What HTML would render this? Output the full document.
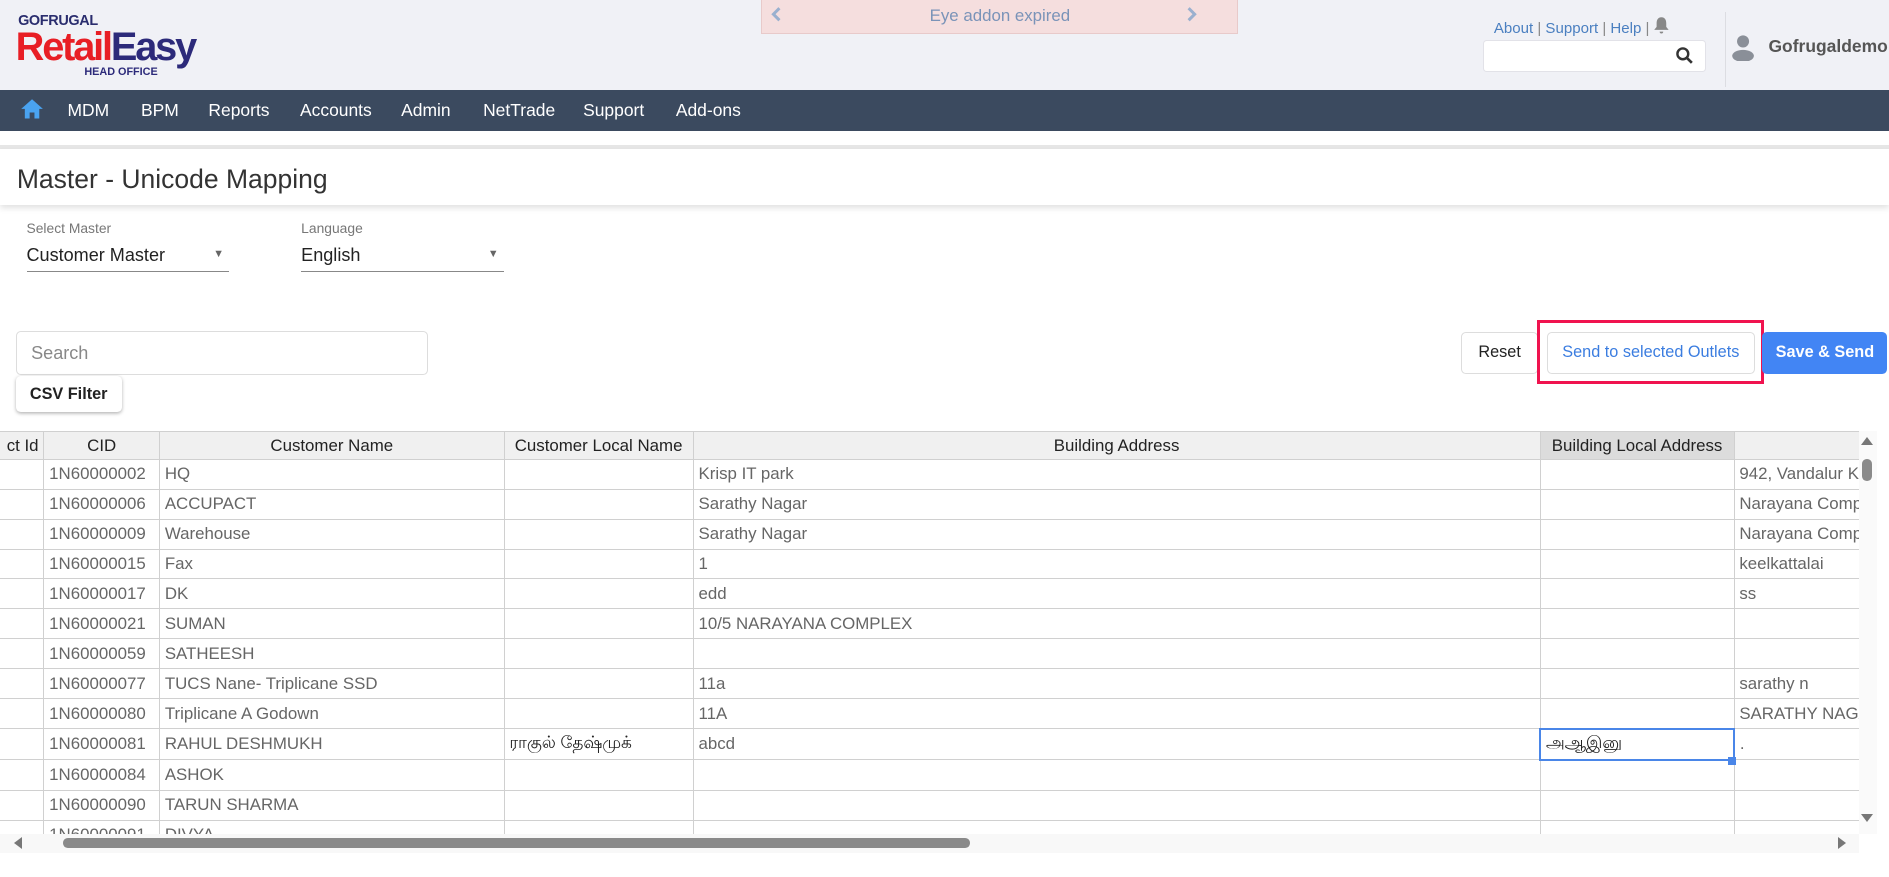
<!DOCTYPE html>
<html><head><meta charset="utf-8"><style>
html,body{margin:0;padding:0;overflow:hidden;background:#fff}
#w{zoom:1.2047;width:1568px;height:728px;position:relative;font-family:"Liberation Sans","Noto Sans CJK SC",sans-serif;overflow:hidden}
.a{position:absolute}
.hdr{left:0;top:0;width:1568px;height:75px;background:#f0f1f6}
.nav{left:0;top:75px;width:1568px;height:34px;background:#3b4a5f}
.ni{position:absolute;top:83px;color:#fff;font-size:14.5px}
.lnk{color:#4a7fc0;font-size:12.5px}
table{border-collapse:collapse;font-size:14px;table-layout:fixed}
td,th{border:1px solid #d0d0d0;height:24px;padding:0 4px;white-space:nowrap;overflow:hidden;color:#666;text-align:left}
th{background:#f0f0f0;color:#222;font-weight:normal;text-align:center;height:22px}
.btn{border:1px solid #ddd;border-radius:4px;background:#fff;font-size:13.5px;text-align:center;line-height:32px}
</style></head><body><div id="w">
<div class="a hdr"></div>
<div class="a" style="left:15px;top:11px;font-size:12px;font-weight:bold;color:#2a2d6e;letter-spacing:-0.3px">GOFRUGAL</div>
<div class="a" style="left:13px;top:22px;font-size:33px;font-weight:bold;letter-spacing:-1.8px;line-height:34px"><span style="color:#e81e25">Retail</span><span style="color:#2c2a7a">Easy</span></div>
<div class="a" style="left:70px;top:55px;font-size:9px;font-weight:bold;color:#2c2a7a">HEAD OFFICE</div>
<div class="a" style="left:632px;top:0;width:396px;height:28px;background:#f5dede;border:1px solid #e8caca;border-top:0;box-sizing:border-box;text-align:center;line-height:27px;color:#7a93b8;font-size:14px">Eye addon expired</div>
<svg class="a" style="left:640px;top:6px" width="10" height="12" viewBox="0 0 10 12"><path d="M7 1L2 6l5 5" stroke="#9ab0cf" stroke-width="2.5" fill="none"/></svg>
<svg class="a" style="left:984px;top:6px" width="10" height="12" viewBox="0 0 10 12"><path d="M3 1l5 5-5 5" stroke="#9ab0cf" stroke-width="2.5" fill="none"/></svg>
<div class="a lnk" style="left:1240px;top:17px">About <span style="color:#888">|</span> Support <span style="color:#888">|</span> Help <span style="color:#888">|</span></div>
<svg class="a" style="left:1372px;top:13px" width="14" height="16" viewBox="0 0 14 16"><path d="M7 1c-3 0-4 2.5-4 5v3l-2 2.5h12L11 9V6c0-2.5-1-5-4-5z M5.5 13h3a1.5 1.5 0 0 1-3 0z" fill="#888"/></svg>
<div class="a" style="left:1231px;top:33px;width:185px;height:27px;background:#fff;border:1px solid #e2e2e8;border-radius:3px;box-sizing:border-box"></div>
<svg class="a" style="left:1390px;top:38px" width="16" height="16" viewBox="0 0 16 16"><circle cx="6.5" cy="6.5" r="4.5" stroke="#333" stroke-width="2" fill="none"/><path d="M10 10l4 4" stroke="#333" stroke-width="2.2"/></svg>
<div class="a" style="left:1432px;top:10px;width:1px;height:62px;background:#dcdde2"></div>
<svg class="a" style="left:1437px;top:27px" width="20" height="24" viewBox="0 0 20 24"><circle cx="10" cy="7" r="5" fill="#8a8f98"/><ellipse cx="10" cy="19" rx="9" ry="5" fill="#8a8f98"/></svg>
<div class="a" style="left:1468px;top:30px;font-size:14.5px;font-weight:bold;color:#555">Gofrugaldemo</div>
<div class="a nav"></div>
<svg class="a" style="left:17px;top:81px" width="20" height="18" viewBox="0 0 20 18"><path d="M10 1L1 9h3v8h4v-5h4v5h4V9h3z" fill="#4aa3f0"/></svg>
<span class="ni" style="left:56px">MDM</span><span class="ni" style="left:117px">BPM</span><span class="ni" style="left:173px">Reports</span><span class="ni" style="left:249px">Accounts</span><span class="ni" style="left:333px">Admin</span><span class="ni" style="left:401px">NetTrade</span><span class="ni" style="left:484px">Support</span><span class="ni" style="left:561px">Add-ons</span>
<div class="a" style="left:0;top:109px;width:1568px;height:13px;background:#fff"></div>
<div class="a" style="left:0;top:120px;width:1568px;height:4px;background:#e6e6e6"></div>
<div class="a" style="left:0;top:124px;width:1568px;height:46px;background:#fff;box-shadow:0 3px 5px rgba(0,0,0,.12)"></div>
<div class="a" style="left:14px;top:136px;font-size:22px;color:#333">Master - Unicode Mapping</div>
<div class="a" style="left:22px;top:183px;font-size:11.5px;color:#777">Select Master</div>
<div class="a" style="left:22px;top:203px;font-size:15px;color:#222">Customer Master</div>
<div class="a" style="left:22px;top:225px;width:168px;height:1px;background:#888"></div>
<div class="a" style="left:177px;top:206px;font-size:9px;color:#666">▼</div>
<div class="a" style="left:250px;top:183px;font-size:11.5px;color:#777">Language</div>
<div class="a" style="left:250px;top:203px;font-size:15px;color:#222">English</div>
<div class="a" style="left:250px;top:225px;width:168px;height:1px;background:#888"></div>
<div class="a" style="left:405px;top:206px;font-size:9px;color:#666">▼</div>
<div class="a" style="left:13px;top:275px;width:342px;height:36px;border:1px solid #ddd;border-radius:4px;box-sizing:border-box;background:#fff;font-size:15px;color:#888;padding:9px 12px">Search</div>
<div class="a btn" style="left:13px;top:312px;width:88px;height:30px;line-height:30px;font-weight:bold;color:#222;border:0;box-shadow:0 1px 3px rgba(0,0,0,.3)">CSV Filter</div>
<div class="a btn" style="left:1213px;top:276px;width:62px;height:33px;color:#222">Reset</div>
<div class="a" style="left:1276px;top:266px;width:188px;height:53px;border:3px solid #f0134f;box-sizing:border-box"></div>
<div class="a btn" style="left:1284px;top:276px;width:171px;height:33px;color:#3b7de0">Send to selected Outlets</div>
<div class="a btn" style="left:1463px;top:276px;width:102px;height:33px;background:#4285f4;color:#fff;border-color:#4285f4;font-weight:bold">Save &amp; Send</div>
<div class="a" style="left:0;top:358px;width:1543px;height:334px;overflow:hidden">
<table style="width:1700px;margin-left:-1px">
<colgroup><col style="width:37px"><col style="width:96px"><col style="width:286px"><col style="width:157px"><col style="width:703px"><col style="width:161px"><col style="width:260px"></colgroup>
<tr><th style="text-align:right">ct Id</th><th>CID</th><th>Customer Name</th><th>Customer Local Name</th><th>Building Address</th><th style="background:#dcdcdc">Building Local Address</th><th></th></tr>
<tr><td></td><td>1N60000002</td><td>HQ</td><td></td><td>Krisp IT park</td><td></td><td>942, Vandalur Kelambakkam</td></tr>
<tr><td></td><td>1N60000006</td><td>ACCUPACT</td><td></td><td>Sarathy Nagar</td><td></td><td>Narayana Complex</td></tr>
<tr><td></td><td>1N60000009</td><td>Warehouse</td><td></td><td>Sarathy Nagar</td><td></td><td>Narayana Complex</td></tr>
<tr><td></td><td>1N60000015</td><td>Fax</td><td></td><td>1</td><td></td><td>keelkattalai</td></tr>
<tr><td></td><td>1N60000017</td><td>DK</td><td></td><td>edd</td><td></td><td>ss</td></tr>
<tr><td></td><td>1N60000021</td><td>SUMAN</td><td></td><td>10/5 NARAYANA COMPLEX</td><td></td><td></td></tr>
<tr><td></td><td>1N60000059</td><td>SATHEESH</td><td></td><td></td><td></td><td></td></tr>
<tr><td></td><td>1N60000077</td><td>TUCS Nane- Triplicane SSD</td><td></td><td>11a</td><td></td><td>sarathy n</td></tr>
<tr><td></td><td>1N60000080</td><td>Triplicane A Godown</td><td></td><td>11A</td><td></td><td>SARATHY NAGAR</td></tr>
<tr><td></td><td>1N60000081</td><td>RAHUL DESHMUKH</td><td style="color:#222">ராகுல் தேஷ்முக்</td><td>abcd</td><td style="border:2px solid #4a86e8;color:#222">அஆஇனு</td><td>.</td></tr>
<tr><td></td><td>1N60000084</td><td>ASHOK</td><td></td><td></td><td></td><td></td></tr>
<tr><td></td><td>1N60000090</td><td>TARUN SHARMA</td><td></td><td></td><td></td><td></td></tr>
<tr><td></td><td>1N60000091</td><td>DIVYA</td><td></td><td></td><td></td><td></td></tr>
</table></div>
<div class="a" style="left:1434px;top:628px;width:7px;height:7px;background:#4a86e8"></div>
<div class="a" style="left:1543px;top:358px;width:15px;height:334px;background:#fafafa"></div>
<div class="a" style="left:1545px;top:363px;width:0;height:0;border-left:5px solid transparent;border-right:5px solid transparent;border-bottom:7px solid #777"></div>
<div class="a" style="left:1546px;top:381px;width:8px;height:18px;border-radius:4px;background:#8a8a8a"></div>
<div class="a" style="left:1545px;top:676px;width:0;height:0;border-left:5px solid transparent;border-right:5px solid transparent;border-top:7px solid #777"></div>
<div class="a" style="left:0;top:692px;width:1543px;height:16px;background:#f8f8f8"></div>
<div class="a" style="left:12px;top:695px;width:0;height:0;border-top:5px solid transparent;border-bottom:5px solid transparent;border-right:7px solid #777"></div>
<div class="a" style="left:52px;top:696px;width:753px;height:8px;border-radius:4px;background:#8a8a8a"></div>
<div class="a" style="left:1526px;top:695px;width:0;height:0;border-top:5px solid transparent;border-bottom:5px solid transparent;border-left:7px solid #777"></div>
</div></body></html>
